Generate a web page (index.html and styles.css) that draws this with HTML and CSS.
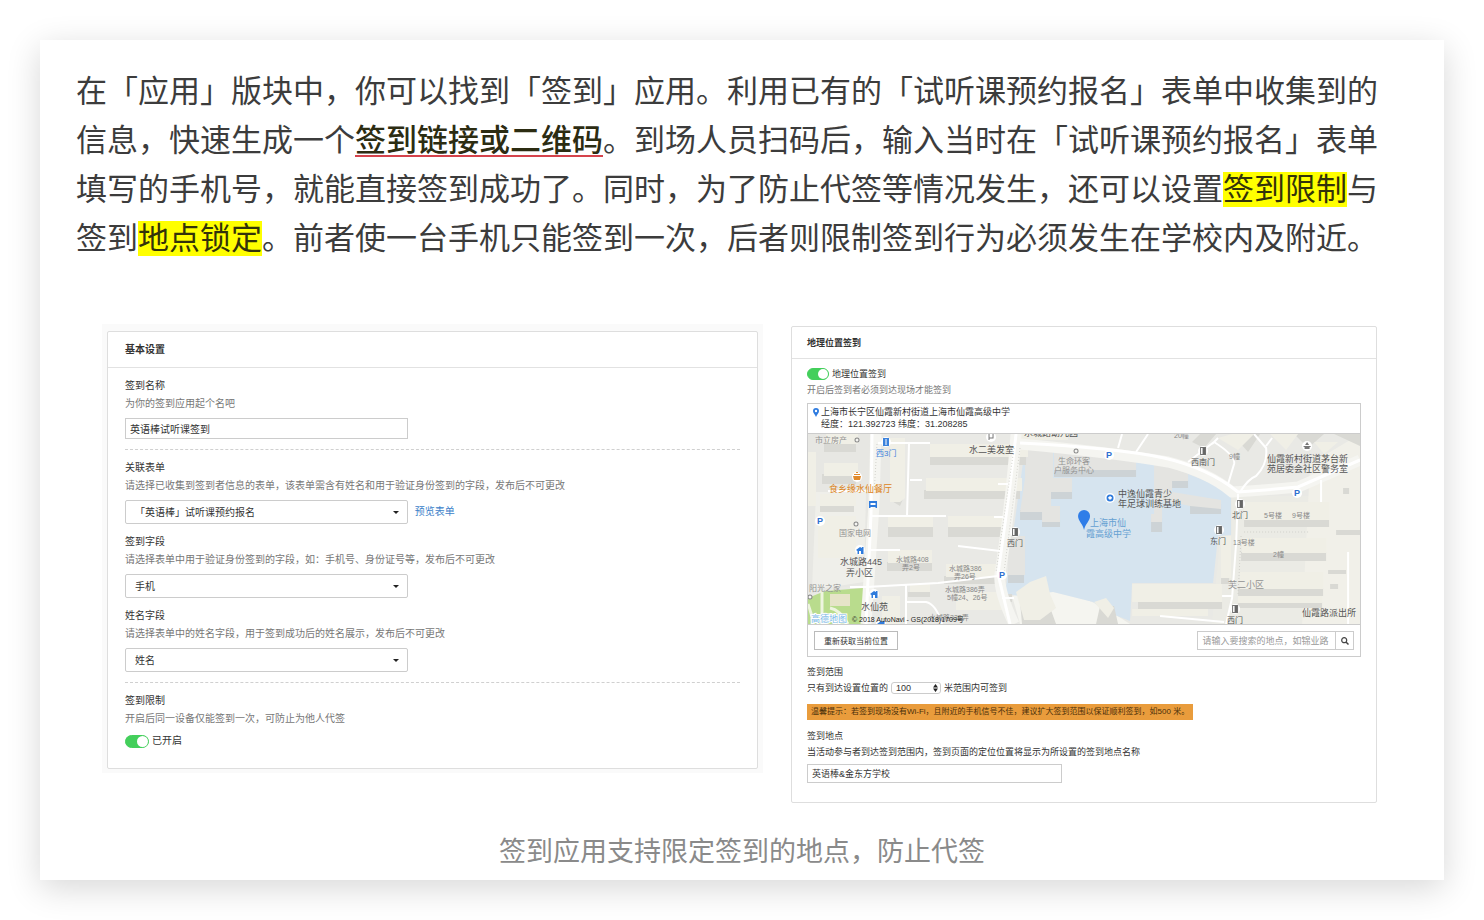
FILE: index.html
```html
<!DOCTYPE html>
<html lang="zh-CN">
<head>
    <meta charset="UTF-8">
    <meta name="viewport" content="width=device-width, initial-scale=1.0">
    <title>签到应用</title>
    <link rel="stylesheet" href="styles.css">
</head>
<body>
    <article class="card">
        <p class="intro">在「应用」版块中，你可以找到「签到」应用。利用已有的「试听课预约报名」表单中收集到的信息，快速生成一个<strong class="underlined">签到链接或二维码</strong>。到场人员扫码后，输入当时在「试听课预约报名」表单填写的手机号，就能直接签到成功了。同时，为了防止代签等情况发生，还可以设置<mark>签到限制</mark>与签到<mark>地点锁定</mark>。前者使一台手机只能签到一次，后者则限制签到行为必须发生在学校内及附近。</p>

        <figure class="figure">
            <div class="shots">
                <div class="shot-frame">
                    <section class="panel basic">
                        <h2 class="panel-title">基本设置</h2>
                        <div class="panel-body">
                            <div class="field">
                                <label for="appName">签到名称</label>
                                <p class="hint">为你的签到应用起个名吧</p>
                                <input class="text-input" type="text" id="appName" value="英语棒试听课签到">
                            </div>
                            <hr>
                            <div class="field">
                                <label for="formSelect">关联表单</label>
                                <p class="hint">请选择已收集到签到者信息的表单，该表单需含有姓名和用于验证身份签到的字段，发布后不可更改</p>
                                <div class="select-row">
                                    <span class="select"><select id="formSelect"><option>「英语棒」试听课预约报名</option></select></span>
                                    <a href="#">预览表单</a>
                                </div>
                            </div>
                            <div class="field">
                                <label for="signField">签到字段</label>
                                <p class="hint">请选择表单中用于验证身份签到的字段，如：手机号、身份证号等，发布后不可更改</p>
                                <div class="select-row">
                                    <span class="select"><select id="signField"><option>手机</option></select></span>
                                </div>
                            </div>
                            <div class="field">
                                <label for="nameField">姓名字段</label>
                                <p class="hint">请选择表单中的姓名字段，用于签到成功后的姓名展示，发布后不可更改</p>
                                <div class="select-row">
                                    <span class="select"><select id="nameField"><option>姓名</option></select></span>
                                </div>
                            </div>
                            <hr>
                            <div class="field">
                                <span class="field-name">签到限制</span>
                                <p class="hint">开启后同一设备仅能签到一次，可防止为他人代签</p>
                                <div class="switch-row">
                                    <input class="switch" type="checkbox" id="limit" checked>
                                    <label for="limit">已开启</label>
                                </div>
                            </div>
                        </div>
                    </section>
                </div>

                <section class="panel location">
                    <h2 class="panel-title">地理位置签到</h2>
                    <div class="panel-body">
                        <div class="switch-row">
                            <input class="switch" type="checkbox" id="geo" checked>
                            <label for="geo">地理位置签到</label>
                        </div>
                        <p class="hint">开启后签到者必须到达现场才能签到</p>

                        <div class="map-box">
                            <div class="map-address">
                                <svg class="pin" viewBox="0 0 6 9" aria-hidden="true"><path d="M3 0a3 3 0 0 0-3 3c0 2 2 3.500 3 6 1-2.500 3-4 3-6a3 3 0 0 0-3-3z" fill="#2e7be0"/><circle cx="3" cy="3" r="1.200" fill="#fff"/></svg>
                                <div>上海市长宁区仙霞新村街道上海市仙霞高级中学<br>经度：121.392723 纬度：31.208285</div>
                            </div>
                            <svg class="map" viewBox="0 0 552 190" preserveAspectRatio="xMidYMid slice" role="img" aria-label="地图">
                                <defs>
                                    <g id="door"><circle r="5" fill="#fff"/><path d="M-2.500-3.500h5v7h-5z" fill="none" stroke="#777"/><path d="M-.5-3.500h3v7h-3z" fill="#666"/></g>
                                    <g id="house"><circle r="5" fill="#fff"/><path d="M-4 0 0-3l2 1v-1h1.500v2.500V4h-6V1z" fill="#2f7bdc"/><path d="M-1 4V1h2v3" fill="#fff"/></g>
                                    <g id="dot"><circle r="2" fill="#f5f5f2" stroke="#888"/></g>
                                </defs>
                                <rect width="552" height="190" fill="#e9e9e5"/>

                                <!-- blocks of ground -->
                                <path d="M0 0H62L58 150 0 158z" fill="#e7e7e3"/>
                                <path d="M8 58H58L56 148 4 156z" fill="#efefea"/>
                                <path d="M416 62H502L494 190H404z" fill="#ebebe5"/>
                                <path d="M502 30 552 0V190H494z" fill="#f1f0e9"/>
                                <path d="M204 162Q250 148 300 176L322 190H212z" fill="#f5f5f0"/>

                                <!-- park -->
                                <path d="M0 164Q9 160 18 157L55 154V190H0z" fill="#b9dc8d"/>
                                <path d="M22 160H42V172H22z" fill="#e6e4c8"/>
                                <path d="M14 157V190M0 170Q4 180 5 190M40 190Q32 176 22 174" fill="none" stroke="#eef5df" stroke-width="3"/>

                                <!-- school grounds -->
                                <path d="M217 14H246V22L330 27 380 40 423 57V101L410 102 405 149H324L322 187 299 178 285 168 245 158 212 162 197 160 205 100z" fill="#d6e4ef"/>
                                <g fill="#cdd3d6">
                                    <path d="M212 76H244V86H212zM234 86H252V93H234zM243 56H264V65H243zM246 32H328V43H246zM200 140H216V149H200z"/>
                                    <path d="M343 84H354V98H343zM354 46H380V54H354zM382 70H413V80H382z"/>
                                </g>
                                <g fill="#e4e4e1">
                                    <path d="M217 14H245V44H264V58H243V72H252V88H234V78H212L217 44z"/>
                                    <path d="M246 16H280L328 26V36H246zM200 102H217V141H200z"/>
                                    <path d="M346 28 380 40V47H364V58L413 66V75L382 72 354 66V88H343V80H346z"/>
                                </g>

                                <!-- buildings -->
                                <g class="shade">
                                    <path d="M16 8H48V18H16zM14 40H48V50H14zM12 70H46V78H12zM82 60H97L92 72 82 66z"/>
                                    <path d="M122 22H218V31H122zM116 56H212V65H116zM80 92H125V103H80zM140 92H200V103H140z"/>
                                    <path d="M79 128H124V137H79zM136 142H190V150H136zM100 158H122V163H100zM186 160H204V168H186z"/>
                                    <path d="M212 168H240L248 190H214zM292 172H306L310 190H288z"/>
                                    <path d="M436 86H521V93H436zM433 118H518V127H433zM430 154H515V162H430zM430 168H514V174H430z"/>
                                    <path d="M330 168H414V175H330zM413 144H421V150H413z"/>
                                    <path d="M392 0H408L396 14 384 8zM424 0H452L440 18zM486 0H516L500 14zM526 0H552V12z"/>
                                    <path d="M535 54H541V60H535zM528 96H552V101H528zM520 136H538V140H520zM522 150H530V155H522z"/>
                                </g>
                                <g class="roof">
                                    <path d="M18 0H50V10H18zM16 29H50V42H16zM12 60H48V72H12zM20 82H48V124H10V88zM0 18H8V72H0z"/>
                                    <path d="M82 4H97V64L92 68H82zM122 10H220V23H122zM118 44H214V57H118zM80 82H125V93H80zM140 82H202V93H140z"/>
                                    <path d="M80 116H124V129H80zM138 130H188V143H138zM102 150H122V158H102zM148 158H196V176H148zM74 162H92V190H74z"/>
                                    <path d="M208 158 222 148 238 142 242 160 248 174 232 186H216zM286 168 298 164 306 174 300 184z"/>
                                    <path d="M436 68H521V86H436zM434 104H518V119H434zM432 138H515V155H432zM430 162H514V169H430z"/>
                                    <path d="M324 150H414V168H324zM324 175H400V182H324zM413 102H423V144H413z"/>
                                    <path d="M410 4 424 0H446L430 16zM462 0H490L478 16zM506 8H530L516 20zM204 0H260V6H204z"/>
                                </g>

                                <!-- roads -->
                                <path d="M68 0 66 70 58 190M208 0Q204 60 192 140 190 156 206 190" class="road-edge"/>
                                <path d="M212 10Q300 18 360 28 400 38 424 58 460 56 490 53L552 26" class="road-edge"/>
                                <path d="M64 0 63 80 58 190M208 0 201 60 190 140 202 190" class="road"/>
                                <path d="M212 9Q310 14 356 24 400 34 430 58 460 56 490 53L552 26" class="road"/>
                                <path d="M70 9H122M101 9 99 82M62 82H138M102 46H114M60 116H92M42 153H58L130 149 190 142M98 150V190M98 168H118Q128 170 134 190M20 57H60M150 112 192 117M190 50H202M186 83H196M194 164H206" class="lane"/>
                                <path d="M380 28 406 8Q428 22 426 30L420 50M404 10 410 4M432 58Q440 45 448 42 460 30 458 14L446 0M458 12 464 4M310 14 314 0M328 18 340 0M430 60 428 110 424 164 418 190M414 162H424M352 182 416 188M513 46V68M540 118V190" class="lane"/>
                                <path d="M206 14 188 138M212 14 196 138M69 10 66 60M436 98H500M433 102 430 160" class="dots"/>

                                <!-- places -->
                                <g class="name gray"><text x="7" y="9">市立房产</text><text x="31" y="102">国家电网</text><text x="1" y="157">阳光之家</text><text x="250" y="30">生命环客</text><text x="246" y="39">户服务中心</text><text x="420" y="154" class="md">芙二小区</text></g>
                                <g class="name tiny"><text x="88" y="128">水城路408</text><text x="94" y="136">弄2号</text><text x="141" y="137">水城路386</text><text x="146" y="145">弄26号</text><text x="137" y="158">水城路386弄</text><text x="139" y="166">5幢24、26号</text><text x="121" y="186">水城路338弄</text><text x="456" y="84">5号楼</text><text x="484" y="84">9号楼</text><text x="425" y="111">13号楼</text><text x="465" y="123">2幢</text><text x="421" y="25">9幢</text><text x="366" y="4">20幢</text></g>
                                <g class="name md"><text x="161" y="19">水二美发室</text><text x="32" y="131">水城路445</text><text x="38" y="142">弄小区</text><text x="53" y="176">水仙苑</text><text x="310" y="63">中逸仙霞青少</text><text x="310" y="73">年足球训练基地</text><text x="459" y="28">仙霞新村街道茅台新</text><text x="459" y="38">苑居委会社区警务室</text><text x="494" y="182">仙霞路派出所</text><text x="216" y="2">水城路幼儿园</text></g>
                                <g class="name"><text x="199" y="112">西门</text><text x="383" y="31">西南门</text><text x="424" y="84">北门</text><text x="402" y="110">东门</text><text x="419" y="189">西门</text></g>
                                <g class="name md blue"><text x="282" y="92">上海市仙</text><text x="278" y="103">霞高级中学</text></g>
                                <text x="68" y="22" class="name link">西3门</text>
                                <text x="21" y="58" class="name md orange">食乡缘水仙餐厅</text>

                                <use href="#dot" x="49" y="6"/><use href="#dot" x="48" y="90"/><use href="#dot" x="2" y="163"/><use href="#dot" x="268" y="17"/>
                                <use href="#door" x="207" y="98"/><use href="#door" x="395" y="17"/><use href="#door" x="432" y="70"/><use href="#door" x="411" y="96"/><use href="#door" x="427" y="175"/>
                                <use href="#house" x="52" y="116"/><use href="#house" x="66" y="160"/><use href="#house" x="73" y="190"/>
                                <circle cx="78" cy="8" r="5" fill="#fff"/><path d="M75 4h6v8h-6z" fill="#3b82dc"/><path d="M78 5v6" stroke="#fff"/>
                                <circle cx="49" cy="43" r="5" fill="#fff"/><path d="M45 42h8l-1 4h-6zM46 40h6v1h-6zM48 38h2v1h-2z" fill="#e08a2b"/>
                                <path d="M61 67h8v7h-1.500v-1h-5v1H61z" fill="#2f7bdc"/><path d="M62.500 71h5v-2h-5z" fill="#fff"/>
                                <circle cx="183" cy="3" r="5" fill="#fff"/><path d="M181 0v6M185 0v4h-4" fill="none" stroke="#777"/>
                                <circle cx="302" cy="64" r="5" fill="#fff"/><circle cx="302" cy="64" r="3.500" fill="#2f7bdc"/><path d="m302 62 2 1.500-1 2h-2l-1-2z" fill="#fff"/>
                                <circle cx="499" cy="12" r="5" fill="#fff"/><path d="M495.500 12h7v1h-1v2h-5v-2h-1zM497 11l2-3 2 3z" fill="#777"/>
                                <g class="parking"><circle cx="12" cy="87" r="5"/><text x="9" y="90">P</text><circle cx="301" cy="21" r="5"/><text x="298" y="24">P</text><circle cx="194" cy="141" r="5"/><text x="191" y="144">P</text><circle cx="489" cy="59" r="5"/><text x="486" y="62">P</text></g>
                                <path d="M276 76a6 6 0 0 0-6 6c0 5 5 8 6 14 1-6 6-9 6-14a6 6 0 0 0-6-6z" fill="#2f7de8"/>

                                <text x="3" y="188" class="name md logo">高德地图</text>
                                <text x="44" y="188" class="copyright">© 2018 AutoNavi - GS(2018)1709号</text>
                            </svg>
                            <div class="map-tools">
                                <button type="button" class="locate">重新获取当前位置</button>
                                <div class="search">
                                    <input type="text" aria-label="搜索地点" placeholder="请输入要搜索的地点，如锦业路">
                                    <button type="button" aria-label="搜索"><svg viewBox="0 0 8 8" aria-hidden="true"><circle cx="3.200" cy="3.200" r="2.500" fill="none" stroke="#444" stroke-width="1.200"/><path d="m5 5 2.500 2.500" stroke="#444" stroke-width="1.500"/></svg></button>
                                </div>
                            </div>
                        </div>

                        <label for="range">签到范围</label>
                        <div class="range-row">
                            <span>只有到达设置位置的</span>
                            <span class="stepper">
                                <select id="range"><option>100</option></select>
                                <svg viewBox="0 0 5 8" aria-hidden="true"><path d="m2.500 0 2.500 3.500H0zM2.500 8 0 4.500h5z" fill="#222"/></svg>
                            </span>
                            <span>米范围内可签到</span>
                        </div>
                        <p class="notice">温馨提示：若签到现场没有Wi-Fi，且附近的手机信号不佳，建议扩大签到范围以保证顺利签到，如500 米。</p>
                        <label for="place">签到地点</label>
                        <p class="note">当活动参与者到达签到范围内，签到页面的定位位置将显示为所设置的签到地点名称</p>
                        <input class="text-input" type="text" id="place" value="英语棒&amp;金东方学校">
                    </div>
                </section>
            </div>
            <figcaption>签到应用支持限定签到的地点，防止代签</figcaption>
        </figure>
    </article>
</body>
</html>
```

FILE: styles.css
```css
* { box-sizing: border-box; }
body { margin: 0; background: #fff; font-family: "Liberation Sans", "Noto Sans CJK SC", sans-serif; color: #3c3c3c; }
p, h2, figure { margin: 0; }
input, select, button { font-family: inherit; font-size: inherit; color: inherit; margin: 0; }

.card { margin: 40px; padding: 27px 36px 9px; background: #fff; box-shadow: 0 8px 32px rgba(0,0,0,0.16); }
.intro { font-size: 31px; line-height: 49px; }
.underlined { font-weight: 500; color: #2c2c12; text-decoration: underline 2px #d5434c; text-underline-offset: 4px; text-decoration-skip-ink: none; }
mark { background: #ffff00; color: #33330a; }

.figure { padding-top: 61px; }
.shots { display: grid; grid-template-columns: 53fr 47fr; gap: 28px; align-items: start; padding: 0 31px 0 26px; }
figcaption { margin-top: 30px; font-size: 27px; line-height: 38px; text-align: center; color: #8a8a8a; }

.shot-frame { padding: 7px 5px 4px; background: #fafafa; }
.panel { background: #fff; border: 1px solid #dedede; border-radius: 2px; color: #333; }
.panel-title { border-bottom: 1px solid #e2e2e2; font-size: inherit; font-weight: bold; }
.panel label, .field-name { display: block; color: #333; }
.hint { color: #777; }
.text-input { display: block; width: 46%; border: 1px solid #ccc; padding: 0 4px; background: #fff; }

.switch-row { display: flex; align-items: center; gap: 3px; }
.switch { appearance: none; display: flex; justify-content: flex-end; width: 24px; height: 13px; border-radius: 7px; background: #43cf5b; border: 1px solid #43cf5b; }
.switch::before { content: ""; width: 11px; height: 11px; border-radius: 50%; background: #fff; }
.switch:not(:checked) { justify-content: flex-start; background: #ccc; border-color: #ccc; }

.basic { font-size: 10px; line-height: 18px; }
.basic .panel-title { padding: 9px 17px 8px; }
.basic .panel-body { padding: 9px 17px 19px; }
.basic .hint { margin-bottom: 5px; }
.basic .text-input { height: 21px; }
.basic .field + .field { margin-top: 9px; }
.basic hr { margin: 10px 0 9px; border: 0; border-top: 1px dashed #d0d0d0; }
.basic .switch-row { height: 16px; }
.select-row { display: flex; align-items: center; gap: 7px; }
.select { position: relative; width: 46%; }
.select select { appearance: none; display: block; width: 100%; height: 24px; padding: 0 20px 0 9px; border: 1px solid #ccc; border-radius: 2px; background: #fff; }
.select::after { content: ""; position: absolute; right: 9px; top: 11px; border: 3px solid transparent; border-top-color: #222; border-bottom: 0; pointer-events: none; }
.select-row a { color: #3b7fc9; text-decoration: none; }

.location { margin-top: 2px; font-size: 9px; line-height: 16px; }
.location .panel-title { padding: 8px 15px 7px; }
.location .panel-body { padding: 7px 15px 19px; }
.location .hint { margin-bottom: 5px; }
.location .switch { width: 22px; height: 12px; }
.location .switch::before { width: 10px; height: 10px; }
.location .text-input { height: 19px; margin-top: 4px; }

.map-box { margin-bottom: 7px; border: 1px solid #ccc; }
.map-address { display: flex; gap: 2px; padding: 2px 5px 3px; line-height: 12px; border-bottom: 1px solid #ccc; }
.pin { width: 6px; height: 9px; margin-top: 2px; }
.map { display: block; width: 100%; height: 190px; }
.map-tools { display: flex; justify-content: space-between; align-items: center; padding: 6px; border-top: 1px solid #ccc; }
.locate { height: 19px; padding: 0 9px; border: 1px solid #bbb; background: #fff; font-size: 8px; }
.search { display: flex; width: 29%; height: 19px; border: 1px solid #ccc; }
.search input { flex: 1; min-width: 0; padding: 0 4px; border: 0; background: #fff; }
.search input::placeholder { color: #999; }
.search button { display: flex; align-items: center; justify-content: center; width: 18px; padding: 0; border: 0; border-left: 1px solid #ccc; background: #fff; }
.search svg { width: 8px; height: 8px; }

.range-row { display: flex; align-items: center; gap: 3px; height: 16px; }
.stepper { position: relative; width: 50px; height: 12px; }
.stepper select { appearance: none; display: block; width: 100%; height: 12px; padding: 0 4px; border: 1px solid #ccc; border-radius: 3px; background: #fff; line-height: 10px; }
.stepper svg { position: absolute; right: 3px; top: 2px; width: 5px; height: 8px; pointer-events: none; }
.notice { width: fit-content; margin: 8px 0; padding: 0 4px; background: #e99c3c; font-size: 8px; color: #4a2f0a; }

.roof { fill: #f0efe6; }
.shade { fill: #d9d9d4; }
.road-edge { fill: none; stroke: #f5f5f1; stroke-width: 11; }
.road { fill: none; stroke: #fff; stroke-width: 3; }
.lane { fill: none; stroke: #fff; stroke-width: 2; }
.dots { fill: none; stroke: #d2d2cc; stroke-dasharray: 1 2; }
.name { font-size: 8px; fill: #555; }
.md { font-size: 9px; }
.tiny { font-size: 7px; fill: #888; }
.gray { fill: #929292; }
.blue { fill: #64a0d2; }
.link { fill: #3b82dc; }
.orange { fill: #dc8420; }
.logo { fill: #79b8e6; stroke: #fff; stroke-width: 2; paint-order: stroke; }
.copyright { font-size: 7px; fill: #222; }
.parking circle { fill: #fff; }
.parking text { font-size: 9px; font-weight: bold; fill: #2f6fd0; }
```
